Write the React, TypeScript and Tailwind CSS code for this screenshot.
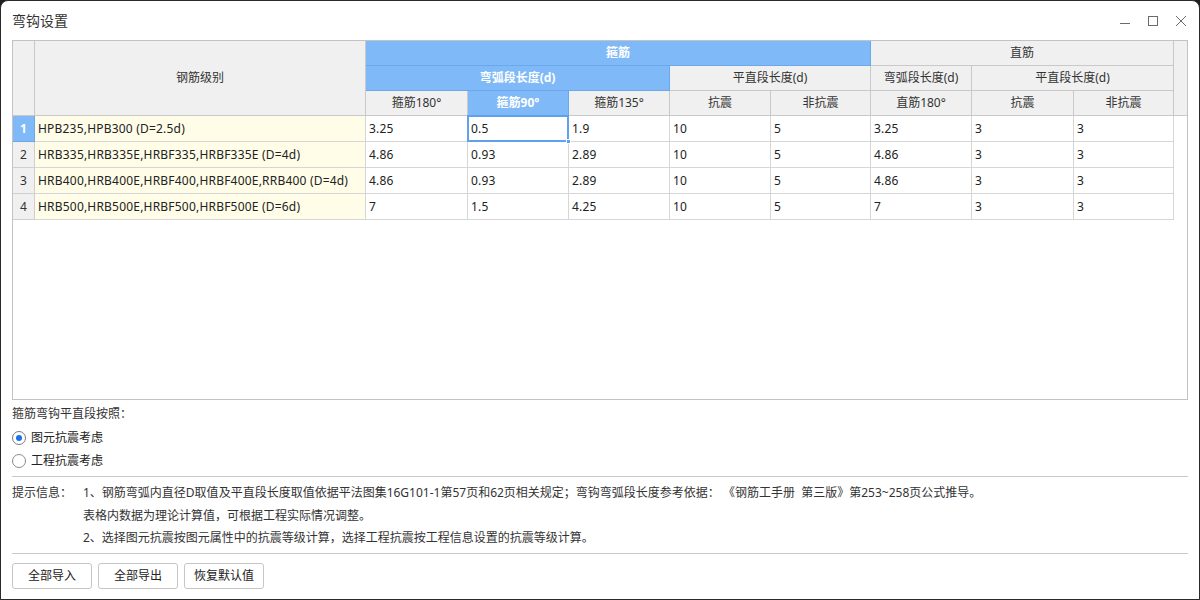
import React from 'react';

const FONT = "font-['Noto_Sans','Noto_Sans_CJK_SC',sans-serif]";

type Row = {
  name: string;
  values: string[];
};

const rows: Row[] = [
  { name: 'HPB235,HPB300 (D=2.5d)', values: ['3.25', '0.5', '1.9', '10', '5', '3.25', '3', '3'] },
  { name: 'HRB335,HRB335E,HRBF335,HRBF335E (D=4d)', values: ['4.86', '0.93', '2.89', '10', '5', '4.86', '3', '3'] },
  { name: 'HRB400,HRB400E,HRBF400,HRBF400E,RRB400 (D=4d)', values: ['4.86', '0.93', '2.89', '10', '5', '4.86', '3', '3'] },
  { name: 'HRB500,HRB500E,HRBF500,HRBF500E (D=6d)', values: ['7', '1.5', '4.25', '10', '5', '7', '3', '3'] },
];

// grey header cell
const hd = 'flex items-center justify-center border-r border-b border-[#c9c9c9] bg-[#f0f0f0] text-[#333]';
// blue (active) header cell
const hdOn = 'flex items-center justify-center border-r border-b border-[#6aa7ec] bg-[#7fb9f7] font-bold text-white';
// plain body cell
const td = 'flex items-center border-r border-b border-[#d6d6d6] pl-[3px] tracking-[0.2px] text-[#222]';

const HookTable: React.FC = () => (
  <div className="h-[360px] border border-[#c3c3c3] bg-white">
    <div className="grid grid-cols-[22px_331px_102px_101px_101px_101px_100px_101px_102px_100px_13px] grid-rows-[25px_25px_25px_26px_26px_26px_26px]">
      {/* header */}
      <div className={`${hd} col-start-1 col-end-2 row-start-1 row-end-4`} />
      <div className={`${hd} col-start-2 col-end-3 row-start-1 row-end-4`}>钢筋级别</div>
      <div className={`${hdOn} col-start-3 col-end-8 row-start-1 row-end-2`}>箍筋</div>
      <div className={`${hd} col-start-8 col-end-11 row-start-1 row-end-2`}>直筋</div>
      <div className="col-start-11 col-end-12 row-start-1 row-end-4 border-b border-[#c9c9c9] bg-[#f0f0f0]" />

      <div className={`${hdOn} col-start-3 col-end-6 row-start-2 row-end-3`}>弯弧段长度(d)</div>
      <div className={`${hd} col-start-6 col-end-8 row-start-2 row-end-3`}>平直段长度(d)</div>
      <div className={`${hd} col-start-8 col-end-9 row-start-2 row-end-3`}>弯弧段长度(d)</div>
      <div className={`${hd} col-start-9 col-end-11 row-start-2 row-end-3`}>平直段长度(d)</div>

      <div className={`${hd} col-start-3 col-end-4 row-start-3 row-end-4`}>箍筋180°</div>
      <div className={`${hdOn} col-start-4 col-end-5 row-start-3 row-end-4`}>箍筋90°</div>
      <div className={`${hd} col-start-5 col-end-6 row-start-3 row-end-4`}>箍筋135°</div>
      <div className={`${hd} col-start-6 col-end-7 row-start-3 row-end-4`}>抗震</div>
      <div className={`${hd} col-start-7 col-end-8 row-start-3 row-end-4`}>非抗震</div>
      <div className={`${hd} col-start-8 col-end-9 row-start-3 row-end-4`}>直筋180°</div>
      <div className={`${hd} col-start-9 col-end-10 row-start-3 row-end-4`}>抗震</div>
      <div className={`${hd} col-start-10 col-end-11 row-start-3 row-end-4`}>非抗震</div>

      {/* body */}
      {rows.map((r, i) => (
        <React.Fragment key={r.name}>
          <div
            className={
              i === 0
                ? 'flex items-center justify-center border-r border-b border-[#6aa7ec] bg-[#7fb9f7] font-bold text-white'
                : 'flex items-center justify-center border-r border-b border-[#cfcfcf] bg-[#f0f0f0] text-[#333]'
            }
          >
            {i + 1}
          </div>
          <div className={`${td} bg-[#fffde8]`}>{r.name}</div>
          {r.values.map((v, j) =>
            i === 0 && j === 1 ? (
              <div key={j} className={`${td} relative`}>
                {v}
                <span className="absolute -top-px -left-px -right-px -bottom-px border-2 border-[#5fa1ec]" />
                <span className="absolute -right-[3px] -bottom-[3px] h-[5px] w-[5px] border border-white bg-[#5fa1ec]" />
              </div>
            ) : (
              <div key={j} className={td}>
                {v}
              </div>
            ),
          )}
          <div />
        </React.Fragment>
      ))}
    </div>
  </div>
);

const Radio: React.FC<{ checked?: boolean; label: string }> = ({ checked, label }) => (
  <label className="flex h-[23px] items-center gap-[5px]">
    <span
      className={`flex h-[14px] w-[14px] items-center justify-center rounded-full border bg-white ${
        checked ? 'border-[#7a7a7a]' : 'border-[#8a8a8a]'
      }`}
    >
      {checked && <span className="h-[6px] w-[6px] rounded-full bg-[#1a73e8]" />}
    </span>
    <span className="text-[#222]">{label}</span>
  </label>
);

const WinButton: React.FC<{ children: React.ReactNode }> = ({ children }) => (
  <button className="h-[26px] w-[80px] rounded-[3px] border border-[#c5c5c5] bg-white text-[#222]">
    {children}
  </button>
);

export default function App() {
  return (
    <div className="h-[600px] w-[1200px] bg-[#1f1f1f]">
      <div
        className={`flex h-[600px] w-[1200px] flex-col rounded-t-[8px] border border-[#2a2a2a] bg-white text-[12px] ${FONT}`}
      >
        {/* title bar */}
        <div className="flex h-[39px] shrink-0 items-center justify-between pl-[11px] pr-[12px]">
          <span className="text-[14px] text-[#333]">弯钩设置</span>
          <div className="flex items-center gap-[16px] text-[#6b6b6b]">
            <svg width="12" height="12" viewBox="0 0 12 12">
              <path d="M1 8.5h10" stroke="currentColor" strokeWidth="1" />
            </svg>
            <svg width="12" height="12" viewBox="0 0 12 12">
              <rect x="1.5" y="1.5" width="9" height="9" fill="none" stroke="currentColor" strokeWidth="1" />
            </svg>
            <svg width="12" height="12" viewBox="0 0 12 12">
              <path d="M1 1l10 10M11 1L1 11" stroke="currentColor" strokeWidth="1" />
            </svg>
          </div>
        </div>

        <div className="flex flex-1 flex-col px-[11px]">
          <HookTable />

          <div className="mt-[4px] flex h-[20px] items-center text-[#333]">箍筋弯钩平直段按照：</div>
          <div className="mt-[2px] flex flex-col">
            <Radio checked label="图元抗震考虑" />
            <Radio label="工程抗震考虑" />
          </div>
          <div className="mt-[4px] border-t border-[#c8c8c8]" />

          <div className="mt-[5px] flex text-[#333]">
            <div className="w-[71px] leading-[22.5px]">提示信息：</div>
            <div className="flex flex-col leading-[22.5px]">
              <span>1、钢筋弯弧内直径D取值及平直段长度取值依据平法图集16G101-1第57页和62页相关规定；弯钩弯弧段长度参考依据：&nbsp;《钢筋工手册&nbsp;&nbsp;第三版》第253~258页公式推导。</span>
              <span>表格内数据为理论计算值，可根据工程实际情况调整。</span>
              <span>2、选择图元抗震按图元属性中的抗震等级计算，选择工程抗震按工程信息设置的抗震等级计算。</span>
            </div>
          </div>
          <div className="mt-[3px] border-t border-[#c8c8c8]" />

          <div className="mt-[9px] flex gap-[6px]">
            <WinButton>全部导入</WinButton>
            <WinButton>全部导出</WinButton>
            <WinButton>恢复默认值</WinButton>
          </div>
        </div>
      </div>
    </div>
  );
}
